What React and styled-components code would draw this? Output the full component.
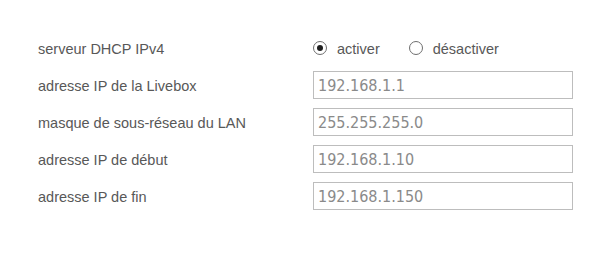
import React, { useState } from 'react';
import styled, { createGlobalStyle } from 'styled-components';

const GlobalStyle = createGlobalStyle`
    body {
        margin: 0;
        background: #ffffff;
        font-family: "Liberation Sans", Arial, sans-serif;
    }
`;

const Form = styled.form`
    display: grid;
    grid-template-columns: 275px 260px;
    grid-auto-rows: 28px;
    row-gap: 9px;
    align-items: center;
    padding: 34px 0 0 38px;
`;

const Label = styled.label`
    font-size: 14.5px;
    color: #585858;
    padding-top: 2px;
`;

const RadioGroup = styled.div`
    display: flex;
    align-items: center;
    gap: 29px;
    padding-top: 2px;
`;

const RadioOption = styled.label`
    display: flex;
    align-items: center;
    gap: 10px;
    font-size: 14.5px;
    color: #585858;
    cursor: pointer;
`;

const RadioCircle = styled.span`
    width: 14px;
    height: 14px;
    margin-top: -3px;
    box-sizing: border-box;
    border-radius: 50%;
    border: 1px solid #6e6e6e;
    background: #fff;
    display: flex;
    align-items: center;
    justify-content: center;

    &::after {
        content: '';
        width: 6px;
        height: 6px;
        border-radius: 50%;
        background: ${(p) => (p.checked ? '#1e1e1e' : 'transparent')};
    }
`;

const Input = styled.input`
    width: 260px;
    height: 28px;
    box-sizing: border-box;
    border: 1px solid #bdbdbd;
    padding: 0 4px;
    font-family: "DejaVu Sans Condensed", "Liberation Sans", sans-serif;
    font-size: 16px;
    color: #8a8a8a;
    outline: none;
`;

const fields = [
    { id: 'ip', label: 'adresse IP de la Livebox', value: '192.168.1.1' },
    { id: 'mask', label: 'masque de sous-réseau du LAN', value: '255.255.255.0' },
    { id: 'start', label: 'adresse IP de début', value: '192.168.1.10' },
    { id: 'end', label: 'adresse IP de fin', value: '192.168.1.150' },
];

export default function App() {
    const [dhcp, setDhcp] = useState(true);
    const [values, setValues] = useState(
        Object.fromEntries(fields.map((f) => [f.id, f.value]))
    );

    return (
        <>
            <GlobalStyle />
            <Form onSubmit={(e) => e.preventDefault()}>
                <Label>serveur DHCP IPv4</Label>
                <RadioGroup>
                    <RadioOption onClick={() => setDhcp(true)}>
                        <RadioCircle checked={dhcp} />
                        activer
                    </RadioOption>
                    <RadioOption onClick={() => setDhcp(false)}>
                        <RadioCircle checked={!dhcp} />
                        désactiver
                    </RadioOption>
                </RadioGroup>
                {fields.map((f) => (
                    <React.Fragment key={f.id}>
                        <Label htmlFor={f.id}>{f.label}</Label>
                        <Input
                            id={f.id}
                            type="text"
                            value={values[f.id]}
                            onChange={(e) => setValues({ ...values, [f.id]: e.target.value })}
                        />
                    </React.Fragment>
                ))}
            </Form>
        </>
    );
}
